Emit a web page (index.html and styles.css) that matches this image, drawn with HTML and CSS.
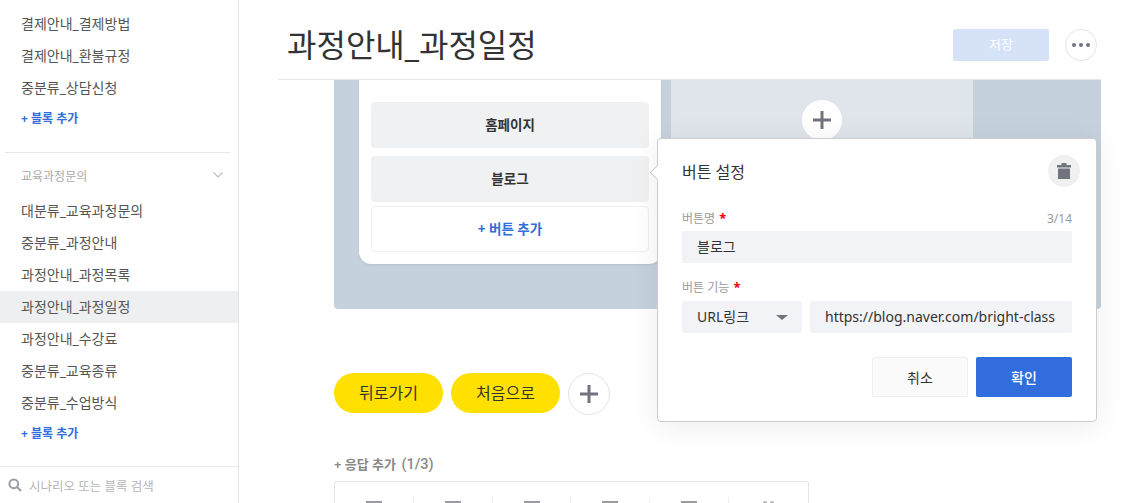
FILE: index.html
```html
<!DOCTYPE html>
<html lang="ko">
<head>
<meta charset="utf-8">
<title>과정안내_과정일정</title>
<link rel="stylesheet" href="styles.css">
</head>
<body>
<div class="app">
  <aside class="sidebar">
    <div class="side-scroll">
      <ul class="side-list">
        <li class="side-item">결제안내_결제방법</li>
        <li class="side-item">결제안내_환불규정</li>
        <li class="side-item">중분류_상담신청</li>
      </ul>
      <div class="side-add">+ 블록 추가</div>
      <div class="side-divider"></div>
      <div class="side-group">
        <span>교육과정문의</span>
        <svg class="chev" width="12" height="8" viewBox="0 0 12 8"><path d="M1.5 1.5 6 6l4.5-4.5" fill="none" stroke="#bcbcbc" stroke-width="1.2"/></svg>
      </div>
      <ul class="side-list">
        <li class="side-item">대분류_교육과정문의</li>
        <li class="side-item">중분류_과정안내</li>
        <li class="side-item">과정안내_과정목록</li>
        <li class="side-item active">과정안내_과정일정</li>
        <li class="side-item">과정안내_수강료</li>
        <li class="side-item">중분류_교육종류</li>
        <li class="side-item">중분류_수업방식</li>
      </ul>
      <div class="side-add">+ 블록 추가</div>
    </div>
    <div class="side-search">
      <svg width="14" height="14" viewBox="0 0 14 14"><circle cx="5.8" cy="5.8" r="4.4" fill="none" stroke="#9a9da6" stroke-width="2"/><path d="M9 9l4 4" stroke="#9a9da6" stroke-width="2.2"/></svg>
      <span>시나리오 또는 블록 검색</span>
    </div>
  </aside>

  <main class="main">
    <header class="header">
      <h1 class="title">과정안내_과정일정</h1>
      <button class="save">저장</button>
      <button class="more"><i></i><i></i><i></i></button>
    </header>

    <div class="content">
      <section class="canvas">
        <div class="card">
          <div class="card-btn">홈페이지</div>
          <div class="card-btn">블로그</div>
          <div class="card-add">+ 버튼 추가</div>
        </div>
        <div class="card-empty">
          <div class="plus-circle">
            <svg width="18" height="18" viewBox="0 0 18 18"><path d="M9 0v18M0 9h18" stroke="#71737e" stroke-width="3"/></svg>
          </div>
        </div>
      </section>

      <div class="quick">
        <div class="pill">뒤로가기</div>
        <div class="pill">처음으로</div>
        <div class="quick-plus">
          <svg width="18" height="18" viewBox="0 0 18 18"><path d="M9 0v18M0 9h18" stroke="#71737e" stroke-width="3"/></svg>
        </div>
      </div>

      <div class="resp-label">+ 응답 추가 <span class="resp-count">(1/3)</span></div>
      <div class="resp-box">
        <div class="resp-cell"><span class="resp-icon"></span></div>
        <div class="resp-cell"><span class="resp-icon"></span></div>
        <div class="resp-cell"><span class="resp-icon"></span></div>
        <div class="resp-cell"><span class="resp-icon"></span></div>
        <div class="resp-cell"><span class="resp-icon"></span></div>
        <div class="resp-cell last"><span class="resp-dots"><i></i><i></i></span></div>
      </div>
    </div>

    <div class="popup">
      <span class="popup-arrow"></span>
      <div class="popup-head">
        <span class="popup-title">버튼 설정</span>
        <span class="trash">
          <svg width="14" height="16" viewBox="0 0 14 16"><path d="M4.5 0h5v2h-5zM0 2h14v2.5H0zM1 5.5h12V16H1z" fill="#71737e"/></svg>
        </span>
      </div>
      <div class="field-label"><span>버튼명 <b>*</b></span><span class="count">3/14</span></div>
      <div class="input">블로그</div>
      <div class="field-label second"><span>버튼 기능 <b>*</b></span></div>
      <div class="row">
        <div class="input select">URL링크<span class="caret"></span></div>
        <div class="input url">https://blog.naver.com/bright-class</div>
      </div>
      <div class="actions">
        <button class="btn cancel">취소</button>
        <button class="btn ok">확인</button>
      </div>
    </div>
  </main>
</div>
</body>
</html>
```
FILE: styles.css
```css
* { box-sizing: border-box; }
html, body { margin: 0; height: 100%; overflow: hidden; background: #fff; }
body { font-family: "Noto Sans", "Noto Sans CJK KR", sans-serif; color: #333; }
ul { list-style: none; margin: 0; padding: 0; }
button { font-family: inherit; border: 0; padding: 0; }

.app { display: flex; height: 503px; }

.sidebar { width: 239px; flex: none; border-right: 1px solid #e3e4ea; display: flex; flex-direction: column; }
.side-scroll { flex: 1; padding-top: 8px; overflow: hidden; }
.side-item { height: 32px; line-height: 32px; padding-left: 21px; font-size: 14px; color: #555; }
.side-item.active { background: #eeeff1; }
.side-add { height: 28px; line-height: 30px; padding-left: 21px; font-size: 12px; font-weight: 700; color: #316ddc; }
.side-divider { height: 1px; background: #e6e7ea; margin: 20px 8px 0 5px; }
.side-group { height: 42px; padding: 4px 14px 0 21px; display: flex; align-items: center; justify-content: space-between; font-size: 12px; color: #aaa; }
.chev { margin-top: -2px; }
.side-search { height: 37px; flex: none; border-top: 1px solid #e8e9ec; display: flex; align-items: center; gap: 7px; padding-left: 8px; font-size: 12.5px; color: #b5b5b5; }

.main { flex: 1; position: relative; overflow: hidden; min-width: 0; }
.header { height: 80px; margin: 0 33px 0 39px; border-bottom: 1px solid #e3e4e6; display: flex; align-items: center; padding: 10px 4px 0 9px; }
.title { flex: 1; margin: 0; font-size: 32px; font-weight: 400; color: #333; line-height: 46px; }
.save { width: 96px; height: 32px; margin: 0 16px 0 0; padding-bottom: 2px; background: #d6e2f8; color: #fff; font-size: 13px; border-radius: 2px; }
.more { width: 32px; height: 32px; border-radius: 50%; border: 1px solid #e4e5e8; background: #fff; display: flex; align-items: center; justify-content: center; gap: 3px; }
.more i { width: 4px; height: 4px; border-radius: 50%; background: #71737e; }

.content { padding-left: 95px; }
.canvas { width: 767px; height: 229px; background: #c5d1dd; border-radius: 0 0 4px 4px; display: flex; gap: 10px; padding-left: 25px; align-items: flex-start; }
.card { width: 302px; height: 184px; background: #fff; border-radius: 0 0 12px 12px; padding: 22px 12px 0; box-shadow: 0 1px 2px rgba(0,0,0,.08); }
.card-btn { height: 46px; line-height: 46px; margin-bottom: 8px; border-radius: 4px; background: #f0f1f3; text-align: center; font-size: 13.5px; font-weight: 700; color: #333; }
.card-add { height: 46px; line-height: 44px; margin-top: -4px; border: 1px solid #eff0f2; border-radius: 4px; text-align: center; font-size: 13.5px; font-weight: 700; color: #316ddc; }
.card-empty { width: 302px; height: 120px; background: #e0e5ec; display: flex; justify-content: center; padding-top: 20px; }
.plus-circle { width: 40px; height: 40px; border-radius: 50%; background: #fff; display: flex; align-items: center; justify-content: center; }

.quick { display: flex; gap: 8px; margin-top: 64px; align-items: flex-start; }
.pill { width: 109px; height: 40px; border-radius: 20px; background: #ffe000; text-align: center; line-height: 40px; font-size: 16px; color: #333; }
.quick-plus { width: 42px; height: 42px; border-radius: 50%; border: 1px solid #e3e4ea; background: #fff; display: flex; align-items: center; justify-content: center; }

.resp-label { margin-top: 39px; height: 20px; line-height: 20px; font-size: 13px; font-weight: 700; color: #888; }
.resp-count { font-family: Roboto, sans-serif; font-size: 14.5px; font-weight: 500; margin-left: 2px; }
.resp-box { margin-top: 7px; width: 475px; height: 60px; border: 1px solid #e3e4ea; border-radius: 2px; display: flex; padding-top: 15px; }
.resp-cell { width: 79px; height: 40px; display: flex; justify-content: center; padding-top: 4px; border-right: 1px solid #eeeff2; }
.resp-cell.last { border-right: 0; }
.resp-icon { width: 16px; height: 16px; background: #9a9ba1; }
.resp-dots { display: flex; gap: 3px; }
.resp-dots i { width: 4px; height: 4px; border-radius: 50%; background: #b5b6bb; }

.popup { position: absolute; left: 418px; top: 138px; width: 440px; height: 284px; background: #fff; border: 1px solid #ccc; border-radius: 4px; padding: 16px 24px 0; box-shadow: 0 4px 30px rgba(0,0,0,.08); }
.popup-arrow { position: absolute; left: -6px; top: 28px; width: 11px; height: 11px; background: #fff; border-left: 1px solid #ccc; border-bottom: 1px solid #ccc; transform: rotate(45deg); }
.popup-head { display: flex; align-items: center; justify-content: space-between; height: 32px; margin: 0 -8px 24px 0; }
.popup-title { font-size: 16px; color: #333; }
.trash { width: 32px; height: 32px; border-radius: 50%; background: #f0f0f0; display: flex; align-items: center; justify-content: center; }
.field-label { display: flex; justify-content: space-between; height: 16px; line-height: 15px; font-size: 12px; color: #999; margin-bottom: 4px; }
.field-label.second { margin: 16px 0 6px; line-height: 17px; }
.field-label b { color: #f00; font-weight: 700; font-size: 13px; margin-left: 1px; }
.input { height: 32px; line-height: 32px; background: #f2f3f7; border-radius: 2px; padding-left: 15px; font-size: 14px; color: #333; }
.row { display: flex; gap: 8px; }
.select { width: 120px; position: relative; }
.caret { position: absolute; right: 14px; top: 14px; border: 5px solid transparent; border-top: 5px solid #71737e; border-bottom: 0; width: 0; height: 0; border-left-width: 6px; border-right-width: 6px; }
.url { flex: 1; white-space: nowrap; overflow: hidden; }
.actions { display: flex; justify-content: flex-end; gap: 8px; margin-top: 24px; }
.btn { width: 96px; height: 40px; font-size: 14px; border-radius: 2px; }
.cancel { background: #fafafa; border: 1px solid #eee; color: #333; }
.ok { background: #316ddc; color: #fff; font-weight: 500; }
```
